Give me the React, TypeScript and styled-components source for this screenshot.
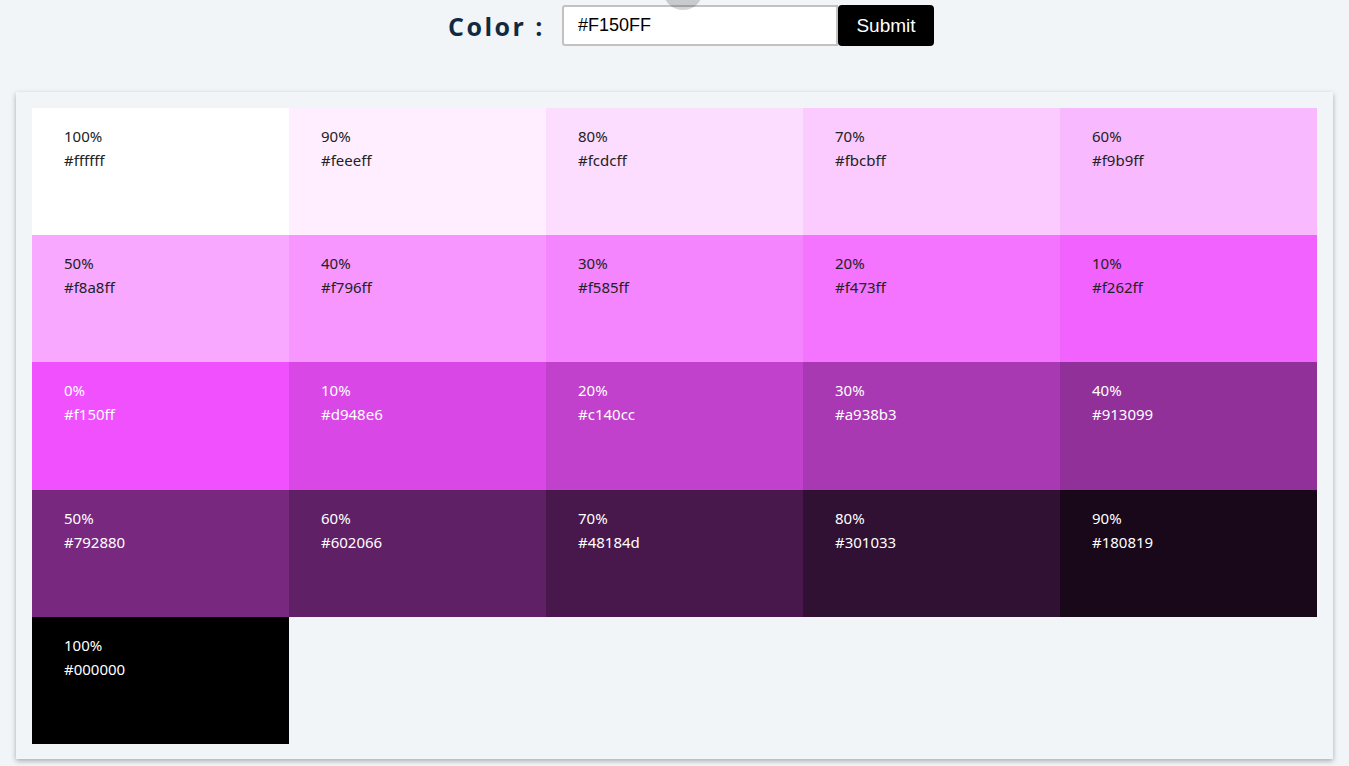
import React, { useState } from 'react';
import styled, { createGlobalStyle } from 'styled-components';

const GlobalStyle = createGlobalStyle`
  * { box-sizing: border-box; }
  html, body {
    margin: 0;
    background: #f1f5f8;
    font-family: "Noto Sans", "Open Sans", sans-serif;
  }
`;

const Header = styled.section`
  position: relative;
  display: flex;
  align-items: center;
  justify-content: center;
  padding: 5px 0 0 33px;
  height: 46px;
  margin-bottom: 46px;
`;

const Title = styled.h3`
  margin: 0 17px 0 0;
  font-family: "Open Sans", sans-serif;
  font-size: 25px;
  font-weight: 700;
  letter-spacing: 2.5px;
  color: #102a42;
`;

const Form = styled.form`
  display: flex;
`;

const Input = styled.input`
  width: 276px;
  height: 41px;
  padding: 0 14px;
  border: 2px solid #c2c2c2;
  border-radius: 3px 0 0 3px;
  font-family: "Liberation Sans", Arial, sans-serif;
  font-size: 18px;
  color: #000;
  outline: none;
`;

const Button = styled.button`
  width: 96px;
  height: 41px;
  background: #000;
  color: #fff;
  border: none;
  border-radius: 4px;
  font-family: "Liberation Sans", Arial, sans-serif;
  font-size: 19px;
  cursor: pointer;
`;

const Blob = styled.div`
  position: absolute;
  left: 663px;
  top: -30px;
  width: 40px;
  height: 40px;
  border-radius: 50%;
  background: rgba(0, 0, 0, 0.17);
  pointer-events: none;
`;

const Card = styled.section`
  margin: 0 16px 20px;
  height: 667px;
  padding: 16px;
  background: #f1f5f8;
  box-shadow: 0 2px 5px rgba(0, 0, 0, 0.3);
`;

const Grid = styled.div`
  display: grid;
  grid-template-columns: repeat(5, 1fr);
  grid-template-rows: repeat(5, 127.2px);
`;

const Tile = styled.article<{ $bg: string; $dark: boolean }>`
  background: ${(p) => p.$bg};
  color: ${(p) => (p.$dark ? '#fff' : '#222')};
  padding: 16px 32px;
  font-size: 15px;
  line-height: 24px;
`;

const Line = styled.p`
  margin: 0;
`;

const tints = ['ffffff', 'feeeff', 'fcdcff', 'fbcbff', 'f9b9ff', 'f8a8ff', 'f796ff', 'f585ff', 'f473ff', 'f262ff'];
const shades = ['d948e6', 'c140cc', 'a938b3', '913099', '792880', '602066', '48184d', '301033', '180819', '000000'];

const colors = [
  ...tints.map((hex, i) => ({ hex, weight: 100 - i * 10, dark: false })),
  { hex: 'f150ff', weight: 0, dark: true },
  ...shades.map((hex, i) => ({ hex, weight: (i + 1) * 10, dark: true })),
];

export default function App() {
  const [color, setColor] = useState('#F150FF');
  return (
    <>
      <GlobalStyle />
      <Header>
        <Blob />
        <Title>Color :</Title>
        <Form onSubmit={(e) => e.preventDefault()}>
          <Input value={color} onChange={(e) => setColor(e.target.value)} />
          <Button type="submit">Submit</Button>
        </Form>
      </Header>
      <Card>
        <Grid>
          {colors.map((c, i) => (
            <Tile key={i} $bg={'#' + c.hex} $dark={c.dark}>
              <Line>{c.weight}%</Line>
              <Line>#{c.hex}</Line>
            </Tile>
          ))}
        </Grid>
      </Card>
    </>
  );
}
